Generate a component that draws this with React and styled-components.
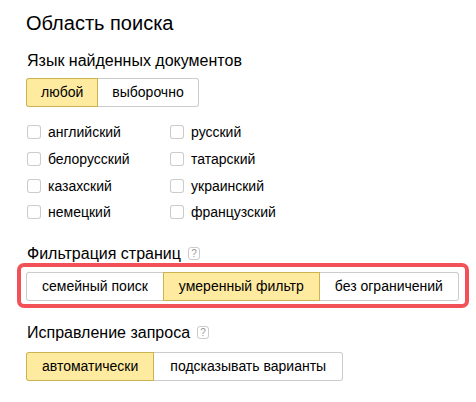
import styled, { createGlobalStyle } from 'styled-components';

const GlobalStyle = createGlobalStyle`
  html, body {
    margin: 0;
    padding: 0;
    background: #fff;
  }
  body {
    font-family: "Liberation Sans", Arial, sans-serif;
    color: #000;
  }
`;

const languages = [
  ['английский', 'русский'],
  ['белорусский', 'татарский'],
  ['казахский', 'украинский'],
  ['немецкий', 'французский'],
];

export default function App() {
  return (
    <>
      <GlobalStyle />
      <Page>
        <Title>Область поиска</Title>

        <Heading $top={16}>Язык найденных документов</Heading>
        <Group $top={8}>
          <Button $checked>любой</Button>
          <Button>выборочно</Button>
        </Group>

        <LangGrid>
          {languages.flat().map((lang) => (
            <Option key={lang}>
              <Box />
              {lang}
            </Option>
          ))}
        </LangGrid>

        <Heading $top={18}>
          Фильтрация страниц
          <Help>?</Help>
        </Heading>
        <Highlight>
          <Group>
            <Button $pad={15}>семейный поиск</Button>
            <Button $pad={15} $checked>
              умеренный фильтр
            </Button>
            <Button $pad={15}>без ограничений</Button>
          </Group>
        </Highlight>

        <Heading $top={15}>
          Исправление запроса
          <Help>?</Help>
        </Heading>
        <Group $top={10}>
          <Button $pad={15} $checked>
            автоматически
          </Button>
          <Button $pad={16}>подсказывать варианты</Button>
        </Group>
      </Page>
    </>
  );
}

const Page = styled.div`
  padding: 11px 0 0 26px;
  display: flex;
  flex-direction: column;
  align-items: flex-start;
`;

const Title = styled.h1`
  margin: 0;
  font-size: 20px;
  line-height: 24px;
  font-weight: normal;
`;

const Heading = styled.h2`
  margin: ${(p) => p.$top || 0}px 0 0 1px;
  font-size: 16px;
  line-height: 19px;
  font-weight: normal;
  display: flex;
  align-items: center;
`;

const Help = styled.span`
  box-sizing: border-box;
  width: 12px;
  height: 13px;
  margin-left: 7px;
  margin-top: 1px;
  border: 1px solid rgba(0, 0, 0, 0.2);
  border-radius: 3px;
  color: #999;
  font-size: 10px;
  line-height: 11px;
  text-align: center;
`;

const Group = styled.div`
  display: flex;
  margin-top: ${(p) => p.$top || 0}px;
`;

const Button = styled.div`
  box-sizing: border-box;
  height: 29px;
  padding: 0 ${(p) => p.$pad || 14}px;
  font-size: 14px;
  line-height: 27px;
  white-space: nowrap;
  background: ${(p) => (p.$checked ? '#ffeba0' : '#fff')};
  border: 1px solid ${(p) => (p.$checked ? 'rgba(153, 122, 0, 0.5)' : 'rgba(0, 0, 0, 0.2)')};
  position: relative;
  z-index: ${(p) => (p.$checked ? 1 : 0)};

  & + & {
    margin-left: -1px;
  }
  &:first-child {
    border-radius: 3px 0 0 3px;
  }
  &:last-child {
    border-radius: 0 3px 3px 0;
  }
`;

const LangGrid = styled.div`
  display: grid;
  grid-template-columns: 143px auto;
  grid-auto-rows: 26.7px;
  margin-top: 12px;
  margin-left: 1px;
`;

const Option = styled.label`
  display: flex;
  align-items: center;
  gap: 7px;
  font-size: 14px;
`;

const Box = styled.span`
  box-sizing: border-box;
  width: 14px;
  height: 14px;
  border: 1px solid rgba(0, 0, 0, 0.2);
  border-radius: 3px;
  background: #fff;
`;

const Highlight = styled.div`
  margin: 0 0 0 -9px;
  padding: 5px 6px 3px 5px;
  border: 4px solid #f25157;
  border-radius: 7px;
`;
